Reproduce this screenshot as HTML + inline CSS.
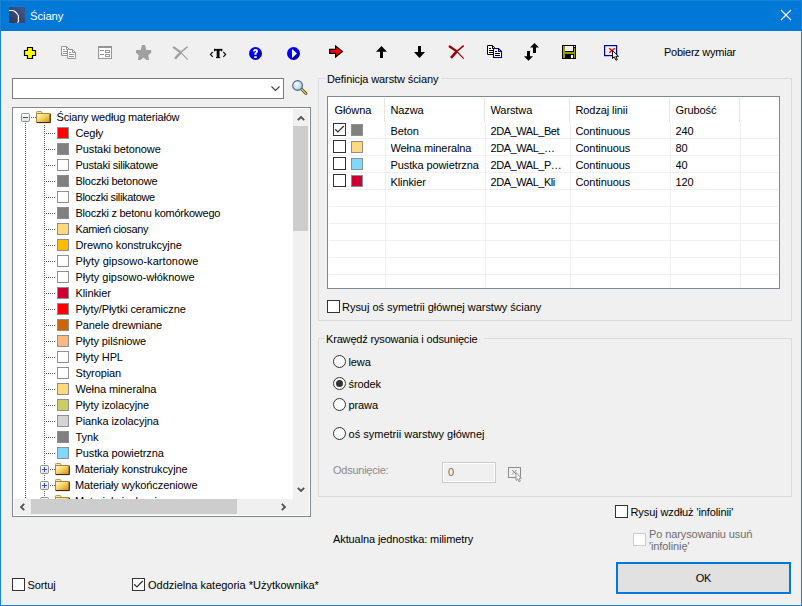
<!DOCTYPE html>
<html><head><meta charset="utf-8">
<style>
*{margin:0;padding:0;box-sizing:border-box}
html,body{width:802px;height:606px;overflow:hidden;background:#f0f0f0}
body{position:relative;font-family:"Liberation Sans",sans-serif;font-size:11px;color:#000}
.a{position:absolute}
.t{position:absolute;white-space:nowrap;line-height:13px;font-size:11px;letter-spacing:-0.1px}
svg{position:absolute;overflow:visible;display:block}
.cb{position:absolute;width:13px;height:13px;border:1px solid #333;background:#fff}
.rd{position:absolute;width:13px;height:13px;border:1px solid #333;border-radius:50%;background:#fff}
.gb{position:absolute;border:1px solid #dcdcdc}
</style></head><body>

<div class="a" style="left:0;top:0;width:802px;height:31px;background:#0078d7"></div>
<div class="a" style="left:0;top:0;width:802px;height:1px;background:#1883d7"></div>
<div class="a" style="left:0;top:0;width:1px;height:606px;background:#1883d7"></div>
<div class="a" style="left:801px;top:0;width:1px;height:606px;background:#1883d7"></div>
<div class="a" style="left:0;top:605px;width:802px;height:1px;background:#1883d7"></div>
<svg style="left:9px;top:7px" width="16" height="16" viewBox="0 0 16 16">
<defs><linearGradient id="tg" x1="1" y1="0" x2="0" y2="1"><stop offset="0" stop-color="#41598a"/><stop offset="1" stop-color="#2b3a62"/></linearGradient></defs>
<rect width="16" height="16" fill="url(#tg)"/>
<path d="M0 3.5H4L6 4.5L8 6.5L9.4 8.8V14.5L8.5 15.8" fill="none" stroke="#fff" stroke-width="1.1"/>
</svg>
<div class="t" style="left:30px;top:9px;color:#fff;font-size:11.3px;line-height:14px">Ściany</div>
<svg style="left:781px;top:10px" width="10" height="10" viewBox="0 0 10 10"><path d="M0 0L10 10M10 0L0 10" stroke="#fff" stroke-width="1.1"/></svg>
<svg style="left:24px;top:47px" width="13" height="13" viewBox="0 0 13 13"><path d="M3.5 0.5H8.5V3.5H11.5V8.5H8.5V11.5H3.5V8.5H0.5V3.5H3.5Z" fill="#ffff00" stroke="#000" stroke-width="1.2"/></svg>
<svg style="left:61px;top:46px" width="16" height="14" viewBox="0 0 16 14"><path d="M0.5 0.5H5.5L8.5 3.5V9.5H0.5Z" fill="#fff" stroke="#969696"/>
<path d="M5.5 0.5V3.5H8.5" fill="none" stroke="#969696"/>
<path d="M2 3.5H4M2 5.5H6M2 7.5H6" stroke="#969696"/>
<path d="M6.5 3.5H11.5L14.5 6.5V12.5H6.5Z" fill="#fff" stroke="#969696"/>
<path d="M11.5 3.5V6.5H14.5" fill="none" stroke="#969696"/>
<path d="M8 6.5H10M8 8.5H13M8 10.5H13" stroke="#969696"/></svg>
<svg style="left:98px;top:46px" width="14" height="13" viewBox="0 0 14 13"><rect x="0.5" y="0.5" width="13" height="12" fill="#fff" stroke="#969696"/>
<rect x="0" y="0" width="14" height="2" fill="#969696"/>
<path d="M2 4.5H6M2 8.5H6" stroke="#969696"/>
<rect x="7.5" y="4.5" width="4" height="2" fill="none" stroke="#969696"/>
<rect x="7.5" y="8.5" width="4" height="2" fill="none" stroke="#969696"/></svg>
<svg style="left:136px;top:45px" width="16" height="16" viewBox="0 0 16 16"><path d="M6 0H9L10.3 5H15.2V7.8L12.3 10.2L13.2 15H10.3L7.5 12.5L4.7 15H1.8L2.7 10.2L0 7.8V5H4.7Z" fill="#a0a0a0"/></svg>
<svg style="left:172px;top:46px" width="17" height="15" viewBox="0 0 17 15"><path d="M8.8 6.4L15.7 13.6" stroke="#a0a0a0" stroke-width="1.1"/><path d="M15.6 0.6L8.8 6.4" stroke="#a0a0a0" stroke-width="1.4"/><path d="M1 0.8L8.8 6.4" stroke="#a0a0a0" stroke-width="2.2"/><path d="M8.8 6.4L3 12.8" stroke="#a0a0a0" stroke-width="2.4"/></svg>
<svg style="left:210px;top:48px" width="17" height="11" viewBox="0 0 17 11"><path d="M2.8 4L0.4 6.4L2.8 8.8M13.3 4L15.7 6.4L13.3 8.8" fill="none" stroke="#000" stroke-width="1.1"/><rect x="4" y="0.9" width="8.2" height="1.7" fill="#000"/><rect x="4" y="0.9" width="1.1" height="2.4" fill="#000"/><rect x="11.1" y="0.9" width="1.1" height="2.4" fill="#000"/><rect x="6.7" y="1" width="2.8" height="9" fill="#000"/><rect x="6" y="9" width="4.2" height="1.1" fill="#000"/></svg>
<svg style="left:249px;top:47px" width="13" height="13" viewBox="0 0 13 13"><defs><linearGradient id="blg" x1="0.25" y1="0.25" x2="0.8" y2="0.8"><stop offset="0" stop-color="#0000ff"/><stop offset="0.45" stop-color="#0000f0"/><stop offset="1" stop-color="#00009a"/></linearGradient></defs><circle cx="6.5" cy="6.5" r="6.5" fill="url(#blg)"/><path d="M4 4.6Q4 2 6.5 2Q9 2 9 4.3Q9 5.6 7.6 6.3L7.5 7.8H5.5V5.8Q7 5.2 7 4.4Q7 3.7 6.4 3.7Q5.8 3.7 5.8 4.6Z" fill="#fff"/><rect x="5.2" y="9.3" width="2.6" height="1.6" fill="#fff"/></svg>
<svg style="left:287px;top:47px" width="13" height="13" viewBox="0 0 13 13"><circle cx="6.5" cy="6.5" r="6.5" fill="url(#blg)"/><path d="M5 2V11L10 6.5Z" fill="#fff"/></svg>
<svg style="left:329px;top:45px" width="15" height="14" viewBox="0 0 15 14"><path d="M0.6 4.4H6.6V0.9L13.4 6.4L6.6 12V8.4H0.6Z" fill="#ff0000" stroke="#000" stroke-width="1.2"/></svg>
<svg style="left:376px;top:46px" width="12" height="13" viewBox="0 0 12 13"><path d="M5.5 0L11 5.8H7V12H4V5.8H0Z" fill="#000"/></svg>
<svg style="left:414px;top:46px" width="12" height="13" viewBox="0 0 12 13"><path d="M4 0H7V6H11L5.5 12L0 6H4Z" fill="#000"/></svg>
<svg style="left:448px;top:45px" width="17" height="15" viewBox="0 0 17 15"><path d="M8.8 6.4L15.7 13.6" stroke="#990000" stroke-width="1.2"/><path d="M15.7 0.7L8.8 6.4" stroke="#990000" stroke-width="1.5"/><path d="M1 1L8.8 6.4" stroke="#990000" stroke-width="2.3"/><path d="M8.8 6.4L3 12.8" stroke="#990000" stroke-width="2.5"/></svg>
<svg style="left:487px;top:45px" width="16" height="14" viewBox="0 0 16 14"><path d="M0.5 0.5H5.5L8.5 3.5V9.5H0.5Z" fill="#fff" stroke="#000"/>
<path d="M5.5 0.5V3.5H8.5" fill="none" stroke="#000"/>
<path d="M2 3.5H4M2 5.5H6M2 7.5H6" stroke="#000"/>
<path d="M6.5 3.5H11.5L14.5 6.5V12.5H6.5Z" fill="#fff" stroke="#000080" stroke-width="1.1"/>
<path d="M11.5 3.5V6.5H14.5" fill="none" stroke="#000080"/>
<path d="M8 6.5H10M8 8.5H13M8 10.5H13" stroke="#000"/></svg>
<svg style="left:524px;top:43px" width="16" height="19" viewBox="0 0 16 19"><path d="M10.5 0L15 4.5H12V10H9V4.5H6Z" fill="#000"/><path d="M3 8H6V13.2H9L4.5 17.8L0 13.2H3Z" fill="#000"/></svg>
<svg style="left:562px;top:45px" width="14" height="14" viewBox="0 0 14 14"><rect x="0" y="0" width="14" height="14" fill="#000"/>
<rect x="1" y="1" width="2" height="12" fill="#999900"/>
<rect x="12" y="3" width="1" height="10" fill="#999900"/>
<rect x="1" y="7" width="12" height="2" fill="#999900"/>
<rect x="3" y="1" width="8" height="5" fill="#fff"/>
<rect x="4" y="2" width="6" height="3" fill="#f0f0f0"/>
<rect x="9" y="10" width="2" height="3" fill="#fff"/>
<rect x="12" y="1" width="1" height="1" fill="#fff"/></svg>
<svg style="left:604px;top:45px" width="16" height="16" viewBox="0 0 16 16"><rect x="0.6" y="0.6" width="12" height="10" fill="#f0f0f0" stroke="#000090" stroke-width="1.2"/>
<path d="M5.2 3.2L8.2 6M10.9 3.2L5.2 7.7" stroke="#ff0000" stroke-width="1.4"/>
<path d="M8.5 5.5V13.5L10.3 11.8L12 15.3L13.3 14.6L11.8 11.3H14.5Z" fill="#fff" stroke="#000" stroke-width="1"/></svg>
<div class="t" style="left:664px;top:46px;color:#000;letter-spacing:-0.25px">Pobierz wymiar</div>
<div class="a" style="left:12px;top:78px;width:272px;height:21px;border:1px solid #7a7a7a;background:#fff"></div>
<svg style="left:271px;top:86px" width="9" height="6" viewBox="0 0 9 6"><path d="M0.5 0.5L4.5 4.5L8.5 0.5" fill="none" stroke="#404040" stroke-width="1.1"/></svg>
<svg style="left:291px;top:79px" width="17" height="17" viewBox="0 0 17 17"><defs><radialGradient id="lens" cx="0.35" cy="0.35" r="0.75"><stop offset="0" stop-color="#f4fcff"/><stop offset="0.6" stop-color="#c4e0f0"/><stop offset="1" stop-color="#90b8d8"/></radialGradient></defs>
<path d="M10.2 9.8L15 14.6" stroke="#5a4410" stroke-width="2.8" stroke-linecap="round"/>
<path d="M10.2 9.8L15 14.6" stroke="#f0c848" stroke-width="1.3" stroke-linecap="round"/>
<circle cx="6.6" cy="6.5" r="4.9" fill="url(#lens)" stroke="#4e6688" stroke-width="1.1"/></svg>
<div class="a" style="left:12px;top:107px;width:299px;height:410px;border:1px solid #828790;background:#fff"></div>
<div class="a" style="left:14px;top:109px;width:279px;height:390px;overflow:hidden">
<svg style="left:0;top:0" width="279" height="390" shape-rendering="crispEdges"><path d="M11 14h1v1h-1zM11 16h1v1h-1zM11 18h1v1h-1zM11 20h1v1h-1zM11 22h1v1h-1zM11 24h1v1h-1zM11 26h1v1h-1zM11 28h1v1h-1zM11 30h1v1h-1zM11 32h1v1h-1zM11 34h1v1h-1zM11 36h1v1h-1zM11 38h1v1h-1zM11 40h1v1h-1zM11 42h1v1h-1zM11 44h1v1h-1zM11 46h1v1h-1zM11 48h1v1h-1zM11 50h1v1h-1zM11 52h1v1h-1zM11 54h1v1h-1zM11 56h1v1h-1zM11 58h1v1h-1zM11 60h1v1h-1zM11 62h1v1h-1zM11 64h1v1h-1zM11 66h1v1h-1zM11 68h1v1h-1zM11 70h1v1h-1zM11 72h1v1h-1zM11 74h1v1h-1zM11 76h1v1h-1zM11 78h1v1h-1zM11 80h1v1h-1zM11 82h1v1h-1zM11 84h1v1h-1zM11 86h1v1h-1zM11 88h1v1h-1zM11 90h1v1h-1zM11 92h1v1h-1zM11 94h1v1h-1zM11 96h1v1h-1zM11 98h1v1h-1zM11 100h1v1h-1zM11 102h1v1h-1zM11 104h1v1h-1zM11 106h1v1h-1zM11 108h1v1h-1zM11 110h1v1h-1zM11 112h1v1h-1zM11 114h1v1h-1zM11 116h1v1h-1zM11 118h1v1h-1zM11 120h1v1h-1zM11 122h1v1h-1zM11 124h1v1h-1zM11 126h1v1h-1zM11 128h1v1h-1zM11 130h1v1h-1zM11 132h1v1h-1zM11 134h1v1h-1zM11 136h1v1h-1zM11 138h1v1h-1zM11 140h1v1h-1zM11 142h1v1h-1zM11 144h1v1h-1zM11 146h1v1h-1zM11 148h1v1h-1zM11 150h1v1h-1zM11 152h1v1h-1zM11 154h1v1h-1zM11 156h1v1h-1zM11 158h1v1h-1zM11 160h1v1h-1zM11 162h1v1h-1zM11 164h1v1h-1zM11 166h1v1h-1zM11 168h1v1h-1zM11 170h1v1h-1zM11 172h1v1h-1zM11 174h1v1h-1zM11 176h1v1h-1zM11 178h1v1h-1zM11 180h1v1h-1zM11 182h1v1h-1zM11 184h1v1h-1zM11 186h1v1h-1zM11 188h1v1h-1zM11 190h1v1h-1zM11 192h1v1h-1zM11 194h1v1h-1zM11 196h1v1h-1zM11 198h1v1h-1zM11 200h1v1h-1zM11 202h1v1h-1zM11 204h1v1h-1zM11 206h1v1h-1zM11 208h1v1h-1zM11 210h1v1h-1zM11 212h1v1h-1zM11 214h1v1h-1zM11 216h1v1h-1zM11 218h1v1h-1zM11 220h1v1h-1zM11 222h1v1h-1zM11 224h1v1h-1zM11 226h1v1h-1zM11 228h1v1h-1zM11 230h1v1h-1zM11 232h1v1h-1zM11 234h1v1h-1zM11 236h1v1h-1zM11 238h1v1h-1zM11 240h1v1h-1zM11 242h1v1h-1zM11 244h1v1h-1zM11 246h1v1h-1zM11 248h1v1h-1zM11 250h1v1h-1zM11 252h1v1h-1zM11 254h1v1h-1zM11 256h1v1h-1zM11 258h1v1h-1zM11 260h1v1h-1zM11 262h1v1h-1zM11 264h1v1h-1zM11 266h1v1h-1zM11 268h1v1h-1zM11 270h1v1h-1zM11 272h1v1h-1zM11 274h1v1h-1zM11 276h1v1h-1zM11 278h1v1h-1zM11 280h1v1h-1zM11 282h1v1h-1zM11 284h1v1h-1zM11 286h1v1h-1zM11 288h1v1h-1zM11 290h1v1h-1zM11 292h1v1h-1zM11 294h1v1h-1zM11 296h1v1h-1zM11 298h1v1h-1zM11 300h1v1h-1zM11 302h1v1h-1zM11 304h1v1h-1zM11 306h1v1h-1zM11 308h1v1h-1zM11 310h1v1h-1zM11 312h1v1h-1zM11 314h1v1h-1zM11 316h1v1h-1zM11 318h1v1h-1zM11 320h1v1h-1zM11 322h1v1h-1zM11 324h1v1h-1zM11 326h1v1h-1zM11 328h1v1h-1zM11 330h1v1h-1zM11 332h1v1h-1zM11 334h1v1h-1zM11 336h1v1h-1zM11 338h1v1h-1zM11 340h1v1h-1zM11 342h1v1h-1zM11 344h1v1h-1zM11 346h1v1h-1zM11 348h1v1h-1zM11 350h1v1h-1zM11 352h1v1h-1zM11 354h1v1h-1zM11 356h1v1h-1zM11 358h1v1h-1zM11 360h1v1h-1zM11 362h1v1h-1zM11 364h1v1h-1zM11 366h1v1h-1zM11 368h1v1h-1zM11 370h1v1h-1zM11 372h1v1h-1zM11 374h1v1h-1zM11 376h1v1h-1zM11 378h1v1h-1zM11 380h1v1h-1zM11 382h1v1h-1zM11 384h1v1h-1zM11 386h1v1h-1zM11 388h1v1h-1zM30 16h1v1h-1zM30 18h1v1h-1zM30 20h1v1h-1zM30 22h1v1h-1zM30 24h1v1h-1zM30 26h1v1h-1zM30 28h1v1h-1zM30 30h1v1h-1zM30 32h1v1h-1zM30 34h1v1h-1zM30 36h1v1h-1zM30 38h1v1h-1zM30 40h1v1h-1zM30 42h1v1h-1zM30 44h1v1h-1zM30 46h1v1h-1zM30 48h1v1h-1zM30 50h1v1h-1zM30 52h1v1h-1zM30 54h1v1h-1zM30 56h1v1h-1zM30 58h1v1h-1zM30 60h1v1h-1zM30 62h1v1h-1zM30 64h1v1h-1zM30 66h1v1h-1zM30 68h1v1h-1zM30 70h1v1h-1zM30 72h1v1h-1zM30 74h1v1h-1zM30 76h1v1h-1zM30 78h1v1h-1zM30 80h1v1h-1zM30 82h1v1h-1zM30 84h1v1h-1zM30 86h1v1h-1zM30 88h1v1h-1zM30 90h1v1h-1zM30 92h1v1h-1zM30 94h1v1h-1zM30 96h1v1h-1zM30 98h1v1h-1zM30 100h1v1h-1zM30 102h1v1h-1zM30 104h1v1h-1zM30 106h1v1h-1zM30 108h1v1h-1zM30 110h1v1h-1zM30 112h1v1h-1zM30 114h1v1h-1zM30 116h1v1h-1zM30 118h1v1h-1zM30 120h1v1h-1zM30 122h1v1h-1zM30 124h1v1h-1zM30 126h1v1h-1zM30 128h1v1h-1zM30 130h1v1h-1zM30 132h1v1h-1zM30 134h1v1h-1zM30 136h1v1h-1zM30 138h1v1h-1zM30 140h1v1h-1zM30 142h1v1h-1zM30 144h1v1h-1zM30 146h1v1h-1zM30 148h1v1h-1zM30 150h1v1h-1zM30 152h1v1h-1zM30 154h1v1h-1zM30 156h1v1h-1zM30 158h1v1h-1zM30 160h1v1h-1zM30 162h1v1h-1zM30 164h1v1h-1zM30 166h1v1h-1zM30 168h1v1h-1zM30 170h1v1h-1zM30 172h1v1h-1zM30 174h1v1h-1zM30 176h1v1h-1zM30 178h1v1h-1zM30 180h1v1h-1zM30 182h1v1h-1zM30 184h1v1h-1zM30 186h1v1h-1zM30 188h1v1h-1zM30 190h1v1h-1zM30 192h1v1h-1zM30 194h1v1h-1zM30 196h1v1h-1zM30 198h1v1h-1zM30 200h1v1h-1zM30 202h1v1h-1zM30 204h1v1h-1zM30 206h1v1h-1zM30 208h1v1h-1zM30 210h1v1h-1zM30 212h1v1h-1zM30 214h1v1h-1zM30 216h1v1h-1zM30 218h1v1h-1zM30 220h1v1h-1zM30 222h1v1h-1zM30 224h1v1h-1zM30 226h1v1h-1zM30 228h1v1h-1zM30 230h1v1h-1zM30 232h1v1h-1zM30 234h1v1h-1zM30 236h1v1h-1zM30 238h1v1h-1zM30 240h1v1h-1zM30 242h1v1h-1zM30 244h1v1h-1zM30 246h1v1h-1zM30 248h1v1h-1zM30 250h1v1h-1zM30 252h1v1h-1zM30 254h1v1h-1zM30 256h1v1h-1zM30 258h1v1h-1zM30 260h1v1h-1zM30 262h1v1h-1zM30 264h1v1h-1zM30 266h1v1h-1zM30 268h1v1h-1zM30 270h1v1h-1zM30 272h1v1h-1zM30 274h1v1h-1zM30 276h1v1h-1zM30 278h1v1h-1zM30 280h1v1h-1zM30 282h1v1h-1zM30 284h1v1h-1zM30 286h1v1h-1zM30 288h1v1h-1zM30 290h1v1h-1zM30 292h1v1h-1zM30 294h1v1h-1zM30 296h1v1h-1zM30 298h1v1h-1zM30 300h1v1h-1zM30 302h1v1h-1zM30 304h1v1h-1zM30 306h1v1h-1zM30 308h1v1h-1zM30 310h1v1h-1zM30 312h1v1h-1zM30 314h1v1h-1zM30 316h1v1h-1zM30 318h1v1h-1zM30 320h1v1h-1zM30 322h1v1h-1zM30 324h1v1h-1zM30 326h1v1h-1zM30 328h1v1h-1zM30 330h1v1h-1zM30 332h1v1h-1zM30 334h1v1h-1zM30 336h1v1h-1zM30 338h1v1h-1zM30 340h1v1h-1zM30 342h1v1h-1zM30 344h1v1h-1zM30 346h1v1h-1zM30 348h1v1h-1zM30 350h1v1h-1zM30 352h1v1h-1zM30 354h1v1h-1zM30 356h1v1h-1zM30 358h1v1h-1zM30 360h1v1h-1zM30 362h1v1h-1zM30 364h1v1h-1zM30 366h1v1h-1zM30 368h1v1h-1zM30 370h1v1h-1zM30 372h1v1h-1zM30 374h1v1h-1zM30 376h1v1h-1zM30 378h1v1h-1zM30 380h1v1h-1zM30 382h1v1h-1zM30 384h1v1h-1zM30 386h1v1h-1zM30 388h1v1h-1zM17 8h1v1h-1zM19 8h1v1h-1zM21 8h1v1h-1zM32 24h1v1h-1zM34 24h1v1h-1zM36 24h1v1h-1zM38 24h1v1h-1zM40 24h1v1h-1zM32 40h1v1h-1zM34 40h1v1h-1zM36 40h1v1h-1zM38 40h1v1h-1zM40 40h1v1h-1zM32 56h1v1h-1zM34 56h1v1h-1zM36 56h1v1h-1zM38 56h1v1h-1zM40 56h1v1h-1zM32 72h1v1h-1zM34 72h1v1h-1zM36 72h1v1h-1zM38 72h1v1h-1zM40 72h1v1h-1zM32 88h1v1h-1zM34 88h1v1h-1zM36 88h1v1h-1zM38 88h1v1h-1zM40 88h1v1h-1zM32 104h1v1h-1zM34 104h1v1h-1zM36 104h1v1h-1zM38 104h1v1h-1zM40 104h1v1h-1zM32 120h1v1h-1zM34 120h1v1h-1zM36 120h1v1h-1zM38 120h1v1h-1zM40 120h1v1h-1zM32 136h1v1h-1zM34 136h1v1h-1zM36 136h1v1h-1zM38 136h1v1h-1zM40 136h1v1h-1zM32 152h1v1h-1zM34 152h1v1h-1zM36 152h1v1h-1zM38 152h1v1h-1zM40 152h1v1h-1zM32 168h1v1h-1zM34 168h1v1h-1zM36 168h1v1h-1zM38 168h1v1h-1zM40 168h1v1h-1zM32 184h1v1h-1zM34 184h1v1h-1zM36 184h1v1h-1zM38 184h1v1h-1zM40 184h1v1h-1zM32 200h1v1h-1zM34 200h1v1h-1zM36 200h1v1h-1zM38 200h1v1h-1zM40 200h1v1h-1zM32 216h1v1h-1zM34 216h1v1h-1zM36 216h1v1h-1zM38 216h1v1h-1zM40 216h1v1h-1zM32 232h1v1h-1zM34 232h1v1h-1zM36 232h1v1h-1zM38 232h1v1h-1zM40 232h1v1h-1zM32 248h1v1h-1zM34 248h1v1h-1zM36 248h1v1h-1zM38 248h1v1h-1zM40 248h1v1h-1zM32 264h1v1h-1zM34 264h1v1h-1zM36 264h1v1h-1zM38 264h1v1h-1zM40 264h1v1h-1zM32 280h1v1h-1zM34 280h1v1h-1zM36 280h1v1h-1zM38 280h1v1h-1zM40 280h1v1h-1zM32 296h1v1h-1zM34 296h1v1h-1zM36 296h1v1h-1zM38 296h1v1h-1zM40 296h1v1h-1zM32 312h1v1h-1zM34 312h1v1h-1zM36 312h1v1h-1zM38 312h1v1h-1zM40 312h1v1h-1zM32 328h1v1h-1zM34 328h1v1h-1zM36 328h1v1h-1zM38 328h1v1h-1zM40 328h1v1h-1zM32 344h1v1h-1zM34 344h1v1h-1zM36 344h1v1h-1zM38 344h1v1h-1zM40 344h1v1h-1zM36 360h1v1h-1zM38 360h1v1h-1zM40 360h1v1h-1zM36 376h1v1h-1zM38 376h1v1h-1zM40 376h1v1h-1zM36 392h1v1h-1zM38 392h1v1h-1zM40 392h1v1h-1z" fill="#5c5c5c"/></svg>
<svg style="left:7px;top:4px" width="9" height="9" viewBox="0 0 9 9"><defs><linearGradient id="bx113" x1="0" y1="0" x2="0" y2="1"><stop offset="0" stop-color="#ffffff"/><stop offset="1" stop-color="#e0e0e0"/></linearGradient></defs>
<rect x="0.5" y="0.5" width="8" height="8" rx="1.2" fill="url(#bx113)" stroke="#909090"/>
<path d="M2 4.5H7" stroke="#3050a0" stroke-width="1"/></svg>
<svg style="left:22px;top:2px" width="16" height="13" viewBox="0 0 16 13"><defs><linearGradient id="fd111" x1="0" y1="0" x2="1" y2="1"><stop offset="0" stop-color="#fffbd0"/><stop offset="0.45" stop-color="#f6d66a"/><stop offset="1" stop-color="#d48a08"/></linearGradient></defs>
<path d="M0.5 2.5V1.2Q0.5 0.5 1.2 0.5H5.3L6.5 2.5Z" fill="#fae9a8" stroke="#b89a50"/>
<rect x="0.5" y="2.5" width="13.5" height="9" fill="url(#fd111)" stroke="#a88838"/>
<path d="M1 11.6H14.3V3" fill="none" stroke="#302000" stroke-width="1"/></svg>
<div class="t" style="left:42.5px;top:2px;letter-spacing:-0.18px">Ściany według materiałów</div>
<div class="a" style="left:43px;top:18px;width:12px;height:12px;border:1px solid #8f8f8f;background:#ff0000"></div>
<div class="t" style="left:61.5px;top:18px">Cegły</div>
<div class="a" style="left:43px;top:34px;width:12px;height:12px;border:1px solid #8f8f8f;background:#808080"></div>
<div class="t" style="left:61.5px;top:34px">Pustaki betonowe</div>
<div class="a" style="left:43px;top:50px;width:12px;height:12px;border:1px solid #8f8f8f;background:#ffffff"></div>
<div class="t" style="left:61.5px;top:50px;letter-spacing:-0.24px">Pustaki silikatowe</div>
<div class="a" style="left:43px;top:66px;width:12px;height:12px;border:1px solid #8f8f8f;background:#808080"></div>
<div class="t" style="left:61.5px;top:66px;letter-spacing:-0.24px">Bloczki betonowe</div>
<div class="a" style="left:43px;top:82px;width:12px;height:12px;border:1px solid #8f8f8f;background:#ffffff"></div>
<div class="t" style="left:61.5px;top:82px;letter-spacing:-0.35px">Bloczki silikatowe</div>
<div class="a" style="left:43px;top:98px;width:12px;height:12px;border:1px solid #8f8f8f;background:#808080"></div>
<div class="t" style="left:61.5px;top:98px;letter-spacing:-0.25px">Bloczki z betonu komórkowego</div>
<div class="a" style="left:43px;top:114px;width:12px;height:12px;border:1px solid #8f8f8f;background:#ffd980"></div>
<div class="t" style="left:61.5px;top:114px;letter-spacing:-0.36px">Kamień ciosany</div>
<div class="a" style="left:43px;top:130px;width:12px;height:12px;border:1px solid #8f8f8f;background:#ffbb00"></div>
<div class="t" style="left:61.5px;top:130px">Drewno konstrukcyjne</div>
<div class="a" style="left:43px;top:146px;width:12px;height:12px;border:1px solid #8f8f8f;background:#ffffff"></div>
<div class="t" style="left:61.5px;top:146px;letter-spacing:0.05px">Płyty gipsowo-kartonowe</div>
<div class="a" style="left:43px;top:162px;width:12px;height:12px;border:1px solid #8f8f8f;background:#ffffff"></div>
<div class="t" style="left:61.5px;top:162px;letter-spacing:-0.01px">Płyty gipsowo-włóknowe</div>
<div class="a" style="left:43px;top:178px;width:12px;height:12px;border:1px solid #8f8f8f;background:#cc0033"></div>
<div class="t" style="left:61.5px;top:178px">Klinkier</div>
<div class="a" style="left:43px;top:194px;width:12px;height:12px;border:1px solid #8f8f8f;background:#ff0000"></div>
<div class="t" style="left:61.5px;top:194px">Płyty/Płytki ceramiczne</div>
<div class="a" style="left:43px;top:210px;width:12px;height:12px;border:1px solid #8f8f8f;background:#cc6600"></div>
<div class="t" style="left:61.5px;top:210px">Panele drewniane</div>
<div class="a" style="left:43px;top:226px;width:12px;height:12px;border:1px solid #8f8f8f;background:#ffb880"></div>
<div class="t" style="left:61.5px;top:226px">Płyty pilśniowe</div>
<div class="a" style="left:43px;top:242px;width:12px;height:12px;border:1px solid #8f8f8f;background:#ffffff"></div>
<div class="t" style="left:61.5px;top:242px">Płyty HPL</div>
<div class="a" style="left:43px;top:258px;width:12px;height:12px;border:1px solid #8f8f8f;background:#ffffff"></div>
<div class="t" style="left:61.5px;top:258px">Styropian</div>
<div class="a" style="left:43px;top:274px;width:12px;height:12px;border:1px solid #8f8f8f;background:#ffd980"></div>
<div class="t" style="left:61.5px;top:274px">Wełna mineralna</div>
<div class="a" style="left:43px;top:290px;width:12px;height:12px;border:1px solid #8f8f8f;background:#cccc66"></div>
<div class="t" style="left:61.5px;top:290px">Płyty izolacyjne</div>
<div class="a" style="left:43px;top:306px;width:12px;height:12px;border:1px solid #8f8f8f;background:#d4d4d4"></div>
<div class="t" style="left:61.5px;top:306px">Pianka izolacyjna</div>
<div class="a" style="left:43px;top:322px;width:12px;height:12px;border:1px solid #8f8f8f;background:#808080"></div>
<div class="t" style="left:61.5px;top:322px">Tynk</div>
<div class="a" style="left:43px;top:338px;width:12px;height:12px;border:1px solid #8f8f8f;background:#80d8ff"></div>
<div class="t" style="left:61.5px;top:338px">Pustka powietrzna</div>
<svg style="left:26px;top:356px" width="9" height="9" viewBox="0 0 9 9"><defs><linearGradient id="bx465" x1="0" y1="0" x2="0" y2="1"><stop offset="0" stop-color="#ffffff"/><stop offset="1" stop-color="#e0e0e0"/></linearGradient></defs>
<rect x="0.5" y="0.5" width="8" height="8" rx="1.2" fill="url(#bx465)" stroke="#909090"/>
<path d="M2 4.5H7" stroke="#3050a0" stroke-width="1"/><path d="M4.5 2V7" stroke="#3050a0" stroke-width="1"/></svg>
<svg style="left:41px;top:354px" width="16" height="13" viewBox="0 0 16 13"><defs><linearGradient id="fd463" x1="0" y1="0" x2="1" y2="1"><stop offset="0" stop-color="#fffbd0"/><stop offset="0.45" stop-color="#f6d66a"/><stop offset="1" stop-color="#d48a08"/></linearGradient></defs>
<path d="M0.5 2.5V1.2Q0.5 0.5 1.2 0.5H5.3L6.5 2.5Z" fill="#fae9a8" stroke="#b89a50"/>
<rect x="0.5" y="2.5" width="13.5" height="9" fill="url(#fd463)" stroke="#a88838"/>
<path d="M1 11.6H14.3V3" fill="none" stroke="#302000" stroke-width="1"/></svg>
<div class="t" style="left:61px;top:354px">Materiały konstrukcyjne</div>
<svg style="left:26px;top:372px" width="9" height="9" viewBox="0 0 9 9"><defs><linearGradient id="bx481" x1="0" y1="0" x2="0" y2="1"><stop offset="0" stop-color="#ffffff"/><stop offset="1" stop-color="#e0e0e0"/></linearGradient></defs>
<rect x="0.5" y="0.5" width="8" height="8" rx="1.2" fill="url(#bx481)" stroke="#909090"/>
<path d="M2 4.5H7" stroke="#3050a0" stroke-width="1"/><path d="M4.5 2V7" stroke="#3050a0" stroke-width="1"/></svg>
<svg style="left:41px;top:370px" width="16" height="13" viewBox="0 0 16 13"><defs><linearGradient id="fd479" x1="0" y1="0" x2="1" y2="1"><stop offset="0" stop-color="#fffbd0"/><stop offset="0.45" stop-color="#f6d66a"/><stop offset="1" stop-color="#d48a08"/></linearGradient></defs>
<path d="M0.5 2.5V1.2Q0.5 0.5 1.2 0.5H5.3L6.5 2.5Z" fill="#fae9a8" stroke="#b89a50"/>
<rect x="0.5" y="2.5" width="13.5" height="9" fill="url(#fd479)" stroke="#a88838"/>
<path d="M1 11.6H14.3V3" fill="none" stroke="#302000" stroke-width="1"/></svg>
<div class="t" style="left:61px;top:370px">Materiały wykończeniowe</div>
<svg style="left:26px;top:388px" width="9" height="9" viewBox="0 0 9 9"><defs><linearGradient id="bx497" x1="0" y1="0" x2="0" y2="1"><stop offset="0" stop-color="#ffffff"/><stop offset="1" stop-color="#e0e0e0"/></linearGradient></defs>
<rect x="0.5" y="0.5" width="8" height="8" rx="1.2" fill="url(#bx497)" stroke="#909090"/>
<path d="M2 4.5H7" stroke="#3050a0" stroke-width="1"/><path d="M4.5 2V7" stroke="#3050a0" stroke-width="1"/></svg>
<svg style="left:41px;top:386px" width="16" height="13" viewBox="0 0 16 13"><defs><linearGradient id="fd495" x1="0" y1="0" x2="1" y2="1"><stop offset="0" stop-color="#fffbd0"/><stop offset="0.45" stop-color="#f6d66a"/><stop offset="1" stop-color="#d48a08"/></linearGradient></defs>
<path d="M0.5 2.5V1.2Q0.5 0.5 1.2 0.5H5.3L6.5 2.5Z" fill="#fae9a8" stroke="#b89a50"/>
<rect x="0.5" y="2.5" width="13.5" height="9" fill="url(#fd495)" stroke="#a88838"/>
<path d="M1 11.6H14.3V3" fill="none" stroke="#302000" stroke-width="1"/></svg>
<div class="t" style="left:61px;top:386px">Materiały izolacyjne</div>
</div>
<div class="a" style="left:293px;top:109px;width:16px;height:390px;background:#f0f0f0"></div>
<div class="a" style="left:293px;top:126px;width:15px;height:105px;background:#cdcdcd"></div>
<svg style="left:297px;top:115px" width="8" height="6" viewBox="0 0 8 6"><path d="M0.8 5.2L4 2L7.2 5.2" fill="none" stroke="#505050" stroke-width="1.8"/></svg>
<svg style="left:297px;top:487px" width="8" height="6" viewBox="0 0 8 6"><path d="M0.8 0.8L4 4L7.2 0.8" fill="none" stroke="#505050" stroke-width="1.8"/></svg>
<div class="a" style="left:14px;top:499px;width:295px;height:16px;background:#f0f0f0"></div>
<div class="a" style="left:31px;top:499px;width:206px;height:15px;background:#cdcdcd"></div>
<svg style="left:19px;top:503px" width="6" height="8" viewBox="0 0 6 8"><path d="M5.2 0.8L2 4L5.2 7.2" fill="none" stroke="#505050" stroke-width="1.8"/></svg>
<svg style="left:281px;top:503px" width="6" height="8" viewBox="0 0 6 8"><path d="M0.8 0.8L4 4L0.8 7.2" fill="none" stroke="#505050" stroke-width="1.8"/></svg>
<div class="gb" style="left:318px;top:78px;width:474px;height:243px"></div>
<div class="a" style="left:325px;top:72px;width:116px;height:12px;background:#f0f0f0"></div>
<div class="t" style="left:327px;top:73px;color:#000;">Definicja warstw ściany</div>
<div class="a" style="left:327px;top:96px;width:453px;height:193px;border:1px solid #828790;background:#fff"></div>
<div class="a" style="left:384px;top:98px;width:1px;height:24px;background:#e5e5e5"></div>
<div class="a" style="left:484px;top:98px;width:1px;height:24px;background:#e5e5e5"></div>
<div class="a" style="left:569px;top:98px;width:1px;height:24px;background:#e5e5e5"></div>
<div class="a" style="left:669px;top:98px;width:1px;height:24px;background:#e5e5e5"></div>
<div class="a" style="left:739px;top:98px;width:1px;height:24px;background:#e5e5e5"></div>
<div class="t" style="left:334.5px;top:104px;color:#000;">Główna</div>
<div class="t" style="left:390.5px;top:104px;color:#000;">Nazwa</div>
<div class="t" style="left:490.5px;top:104px;color:#000;">Warstwa</div>
<div class="t" style="left:575.5px;top:104px;color:#000;">Rodzaj linii</div>
<div class="t" style="left:675.5px;top:104px;color:#000;">Grubość</div>
<div class="a" style="left:385px;top:122px;width:1px;height:166px;background:#f0f0f0"></div>
<div class="a" style="left:485px;top:122px;width:1px;height:166px;background:#f0f0f0"></div>
<div class="a" style="left:570px;top:122px;width:1px;height:166px;background:#f0f0f0"></div>
<div class="a" style="left:670px;top:122px;width:1px;height:166px;background:#f0f0f0"></div>
<div class="a" style="left:740px;top:122px;width:1px;height:166px;background:#f0f0f0"></div>
<div class="a" style="left:329px;top:138px;width:449px;height:1px;background:#f0f0f0"></div>
<div class="a" style="left:329px;top:155px;width:449px;height:1px;background:#f0f0f0"></div>
<div class="a" style="left:329px;top:172px;width:449px;height:1px;background:#f0f0f0"></div>
<div class="a" style="left:329px;top:189px;width:449px;height:1px;background:#f0f0f0"></div>
<div class="a" style="left:329px;top:206px;width:449px;height:1px;background:#f0f0f0"></div>
<div class="a" style="left:329px;top:223px;width:449px;height:1px;background:#f0f0f0"></div>
<div class="a" style="left:329px;top:240px;width:449px;height:1px;background:#f0f0f0"></div>
<div class="a" style="left:329px;top:257px;width:449px;height:1px;background:#f0f0f0"></div>
<div class="a" style="left:329px;top:274px;width:449px;height:1px;background:#f0f0f0"></div>
<div class="cb" style="left:333px;top:123px"></div>
<svg style="left:334px;top:124px" width="11" height="11" viewBox="0 0 11 11"><path d="M1.2 5.2L3.9 7.9L9.8 2" fill="none" stroke="#333" stroke-width="1.3"/></svg>
<div class="a" style="left:351px;top:124px;width:12px;height:12px;border:1px solid #8f8f8f;background:#808080"></div>
<div class="t" style="left:390.5px;top:125px;color:#000;width:92px;overflow:hidden">Beton</div>
<div class="t" style="left:490.5px;top:125px;color:#000;width:78px;overflow:hidden;letter-spacing:-0.45px">2DA_WAL_Bet</div>
<div class="t" style="left:575.5px;top:125px;color:#000;width:92px;overflow:hidden">Continuous</div>
<div class="t" style="left:675.5px;top:125px;color:#000;width:62px;overflow:hidden">240</div>
<div class="cb" style="left:333px;top:140px"></div>
<div class="a" style="left:351px;top:141px;width:12px;height:12px;border:1px solid #8f8f8f;background:#ffd980"></div>
<div class="t" style="left:390.5px;top:142px;color:#000;width:92px;overflow:hidden">Wełna mineralna</div>
<div class="t" style="left:490.5px;top:142px;color:#000;width:78px;overflow:hidden;letter-spacing:-0.45px">2DA_WAL_…</div>
<div class="t" style="left:575.5px;top:142px;color:#000;width:92px;overflow:hidden">Continuous</div>
<div class="t" style="left:675.5px;top:142px;color:#000;width:62px;overflow:hidden">80</div>
<div class="cb" style="left:333px;top:157px"></div>
<div class="a" style="left:351px;top:158px;width:12px;height:12px;border:1px solid #8f8f8f;background:#80d8ff"></div>
<div class="t" style="left:390.5px;top:159px;color:#000;width:92px;overflow:hidden">Pustka powietrzna</div>
<div class="t" style="left:490.5px;top:159px;color:#000;width:78px;overflow:hidden;letter-spacing:-0.45px">2DA_WAL_P…</div>
<div class="t" style="left:575.5px;top:159px;color:#000;width:92px;overflow:hidden">Continuous</div>
<div class="t" style="left:675.5px;top:159px;color:#000;width:62px;overflow:hidden">40</div>
<div class="cb" style="left:333px;top:174px"></div>
<div class="a" style="left:351px;top:175px;width:12px;height:12px;border:1px solid #8f8f8f;background:#cc0033"></div>
<div class="t" style="left:390.5px;top:176px;color:#000;width:92px;overflow:hidden">Klinkier</div>
<div class="t" style="left:490.5px;top:176px;color:#000;width:78px;overflow:hidden;letter-spacing:-0.45px">2DA_WAL_Kli</div>
<div class="t" style="left:575.5px;top:176px;color:#000;width:92px;overflow:hidden">Continuous</div>
<div class="t" style="left:675.5px;top:176px;color:#000;width:62px;overflow:hidden">120</div>
<div class="cb" style="left:327px;top:300px"></div>
<div class="t" style="left:342px;top:301px;color:#000;letter-spacing:-0.03px">Rysuj oś symetrii głównej warstwy ściany</div>
<div class="gb" style="left:318px;top:338px;width:474px;height:159px"></div>
<div class="a" style="left:324px;top:332px;width:160px;height:12px;background:#f0f0f0"></div>
<div class="t" style="left:326px;top:333px;color:#000;letter-spacing:-0.17px">Krawędź rysowania i odsunięcie</div>
<div class="rd" style="left:333px;top:355px"></div>
<div class="t" style="left:348.5px;top:356px;color:#000;">lewa</div>
<div class="rd" style="left:333px;top:377px"></div>
<div class="a" style="left:336px;top:380px;width:7px;height:7px;border-radius:50%;background:#333"></div>
<div class="t" style="left:348.5px;top:378px;color:#000;">środek</div>
<div class="rd" style="left:333px;top:398px"></div>
<div class="t" style="left:348.5px;top:399px;color:#000;">prawa</div>
<div class="rd" style="left:333px;top:427px"></div>
<div class="t" style="left:348.5px;top:428px;color:#000;letter-spacing:0.01px">oś symetrii warstwy głównej</div>
<div class="t" style="left:333px;top:464px;color:#8a8a8a;letter-spacing:-0.25px">Odsunięcie:</div>
<div class="a" style="left:442px;top:462px;width:54px;height:21px;border:1px solid #cccccc;background:#f0f0f0"></div>
<div class="a" style="left:443px;top:463px;width:52px;height:19px;border:1px solid #fff"></div>
<div class="t" style="left:448px;top:466px;color:#6d6d6d;">0</div>
<svg style="left:508px;top:467px" width="16" height="16" viewBox="0 0 16 16"><rect x="0.5" y="0.5" width="12" height="10" fill="none" stroke="#8c8c8c" stroke-width="1"/>
<path d="M4 3L8.5 7.5M8.5 3L4 7.5" stroke="#8c8c8c" stroke-width="1"/>
<path d="M8 5.5V13.5L9.8 11.8L11 14.8L12.3 14.2L11.2 11.3H13.5Z" fill="#f8f8f8" stroke="#8c8c8c" stroke-width="0.9"/></svg>
<div class="t" style="left:333px;top:533px;color:#000;">Aktualna jednostka: milimetry</div>
<div class="cb" style="left:615px;top:505px"></div>
<div class="t" style="left:630.5px;top:506px;color:#000;">Rysuj wzdłuż 'infolinii'</div>
<div class="cb" style="left:633px;top:533px;border-color:#cccccc;background:#fff"></div>
<div class="t" style="left:649px;top:528px;color:#6d6d6d;">Po narysowaniu usuń</div>
<div class="t" style="left:649px;top:540px;color:#6d6d6d;">'infolinię'</div>
<div class="a" style="left:616px;top:562px;width:175px;height:32px;border:2px solid #0078d7;background:#e1e1e1"></div>
<div class="t" style="left:616px;top:572px;width:175px;text-align:center">OK</div>
<div class="cb" style="left:12px;top:578px"></div>
<div class="t" style="left:27.5px;top:579px;color:#000;">Sortuj</div>
<div class="cb" style="left:132px;top:578px"></div>
<svg style="left:133px;top:579px" width="11" height="11" viewBox="0 0 11 11"><path d="M1.2 5.2L3.9 7.9L9.8 2" fill="none" stroke="#333" stroke-width="1.3"/></svg>
<div class="t" style="left:148px;top:579px;color:#000;letter-spacing:-0.01px">Oddzielna kategoria *Użytkownika*</div>
</body></html>
